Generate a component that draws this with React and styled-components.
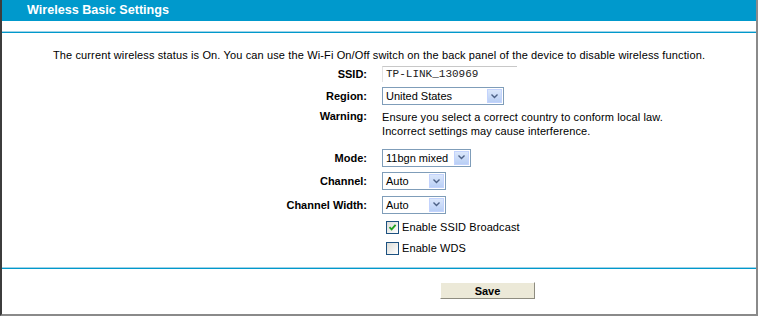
import React from 'react';
import styled, { createGlobalStyle } from 'styled-components';

const GlobalStyle = createGlobalStyle`
  html, body { margin: 0; padding: 0; background: #fff; }
  body { font-family: "Liberation Sans", Arial, sans-serif; font-size: 11px; color: #000; }
`;

const Frame = styled.div`
  box-sizing: border-box;
  width: 758px;
  height: 316px;
  border-left: 2px solid #3c3c3c;
  border-right: 2px solid #8a8a8a;
  border-bottom: 2px solid #8a8a8a;
  display: flex;
  flex-direction: column;
`;

const Header = styled.div`
  height: 21px;
  background: #0099cc;
  color: #fff;
  font-weight: bold;
  font-size: 12.6px;
  line-height: 21px;
  padding-left: 25px;
`;

const Rule = styled.div`
  height: 1px;
  background: #0099cc;
  border-top: 1px solid #9fd3e8;
  margin-top: ${(p) => p.$top}px;
`;

const Notice = styled.p`
  margin: 15px 0 0;
  line-height: 14px;
  text-align: center;
  font-size: 11px;
  letter-spacing: 0.13px;
`;

const Form = styled.div`
  display: grid;
  grid-template-columns: 365px 1fr;
  column-gap: 15px;
  margin-top: 1px;
`;

const Label = styled.div`
  height: ${(p) => p.$h || 22}px;
  display: flex;
  align-items: ${(p) => (p.$top ? 'flex-start' : 'center')};
  justify-content: flex-end;
  padding-top: ${(p) => (p.$top ? 3 : 0)}px;
  box-sizing: border-box;
  font-weight: bold;
  font-size: 11px;
`;

const Cell = styled.div`
  height: ${(p) => p.$h || 22}px;
  display: flex;
  align-items: ${(p) => (p.$top ? 'flex-start' : 'center')};
  box-sizing: border-box;
`;

const TextInput = styled.div`
  box-sizing: border-box;
  width: 135px;
  height: 16px;
  border-top: 1px solid #c8c8c8;
  border-left: 1px solid #e2e2e2;
  padding-left: 3px;
  font-family: "Liberation Mono", "Courier New", monospace;
  font-size: 11px;
  line-height: 15px;
  color: #222;
`;

const Select = styled.div`
  box-sizing: border-box;
  width: ${(p) => p.$w}px;
  height: 18px;
  border: 1px solid #7f9db9;
  display: flex;
  align-items: center;
  justify-content: space-between;
  padding: 0 1px 0 3px;
  font-size: 11px;
`;

const Arrow = styled.span`
  width: 15px;
  height: 14px;
  background: linear-gradient(#dbe7fb, #b9cff5);
  border: 1px solid #c3d3fd;
  box-sizing: border-box;
  display: flex;
  align-items: center;
  justify-content: center;
`;

const Warning = styled.div`
  line-height: 14px;
  padding-top: 3px;
  font-size: 11px;
  letter-spacing: 0.1px;
`;

const CheckRow = styled.label`
  display: flex;
  align-items: center;
  gap: 3px;
  padding-left: 4px;
  font-size: 11px;
  letter-spacing: 0.1px;
`;

const Box = styled.span`
  box-sizing: border-box;
  width: 13px;
  height: 13px;
  border: 1px solid #1c5180;
  background: linear-gradient(135deg, #dcdcd7, #fff);
  display: flex;
  align-items: center;
  justify-content: center;
`;

const Footer = styled.div`
  display: flex;
  justify-content: flex-start;
  padding-left: 438px;
  margin-top: 13px;
`;

const Button = styled.button`
  width: 95px;
  height: 17px;
  padding: 0;
  background: #ece9d8;
  border: 1px solid;
  border-color: #fff #8e8c80 #8e8c80 #fff;
  font-family: "Liberation Sans", Arial, sans-serif;
  font-weight: bold;
  font-size: 11px;
  color: #000;
`;

const Chevron = () => (
  <svg width="7" height="5" viewBox="0 0 7 5">
    <path d="M0.5 0.5 L3.5 3.5 L6.5 0.5" fill="none" stroke="#4d6185" strokeWidth="1.4" />
  </svg>
);

const Dropdown = ({ w, children }) => (
  <Select $w={w}>
    <span>{children}</span>
    <Arrow>
      <Chevron />
    </Arrow>
  </Select>
);

const Checkbox = ({ checked, children }) => (
  <CheckRow>
    <Box>
      {checked && (
        <svg width="9" height="9" viewBox="0 0 9 9">
          <path d="M1.5 4.2 L3.6 6.4 L7.6 1.8" fill="none" stroke="#21a121" strokeWidth="1.8" />
        </svg>
      )}
    </Box>
    {children}
  </CheckRow>
);

export default function App() {
  return (
    <>
      <GlobalStyle />
      <Frame>
        <Header>Wireless Basic Settings</Header>
        <Rule $top={10} />
        <Notice>
          The current wireless status is On. You can use the Wi-Fi On/Off switch on the back panel of the device to disable wireless function.
        </Notice>
        <Form>
          <Label>SSID:</Label>
          <Cell>
            <TextInput>TP-LINK_130969</TextInput>
          </Cell>

          <Label>Region:</Label>
          <Cell>
            <Dropdown w={122}>United States</Dropdown>
          </Cell>

          <Label $top $h={39}>Warning:</Label>
          <Cell $top $h={39}>
            <Warning>
              Ensure you select a correct country to conform local law.
              <br />
              Incorrect settings may cause interference.
            </Warning>
          </Cell>

          <Label $h={23}>Mode:</Label>
          <Cell $h={23}>
            <Dropdown w={89}>11bgn mixed</Dropdown>
          </Cell>

          <Label $h={24}>Channel:</Label>
          <Cell $h={24}>
            <Dropdown w={64}>Auto</Dropdown>
          </Cell>

          <Label $h={23}>Channel Width:</Label>
          <Cell $h={23}>
            <Dropdown w={64}>Auto</Dropdown>
          </Cell>

          <Label $h={22} />
          <Cell $h={22}>
            <Checkbox checked>Enable SSID Broadcast</Checkbox>
          </Cell>

          <Label $h={20} />
          <Cell $h={20}>
            <Checkbox>Enable WDS</Checkbox>
          </Cell>
        </Form>
        <Rule $top={9} />
        <Footer>
          <Button>Save</Button>
        </Footer>
      </Frame>
    </>
  );
}
